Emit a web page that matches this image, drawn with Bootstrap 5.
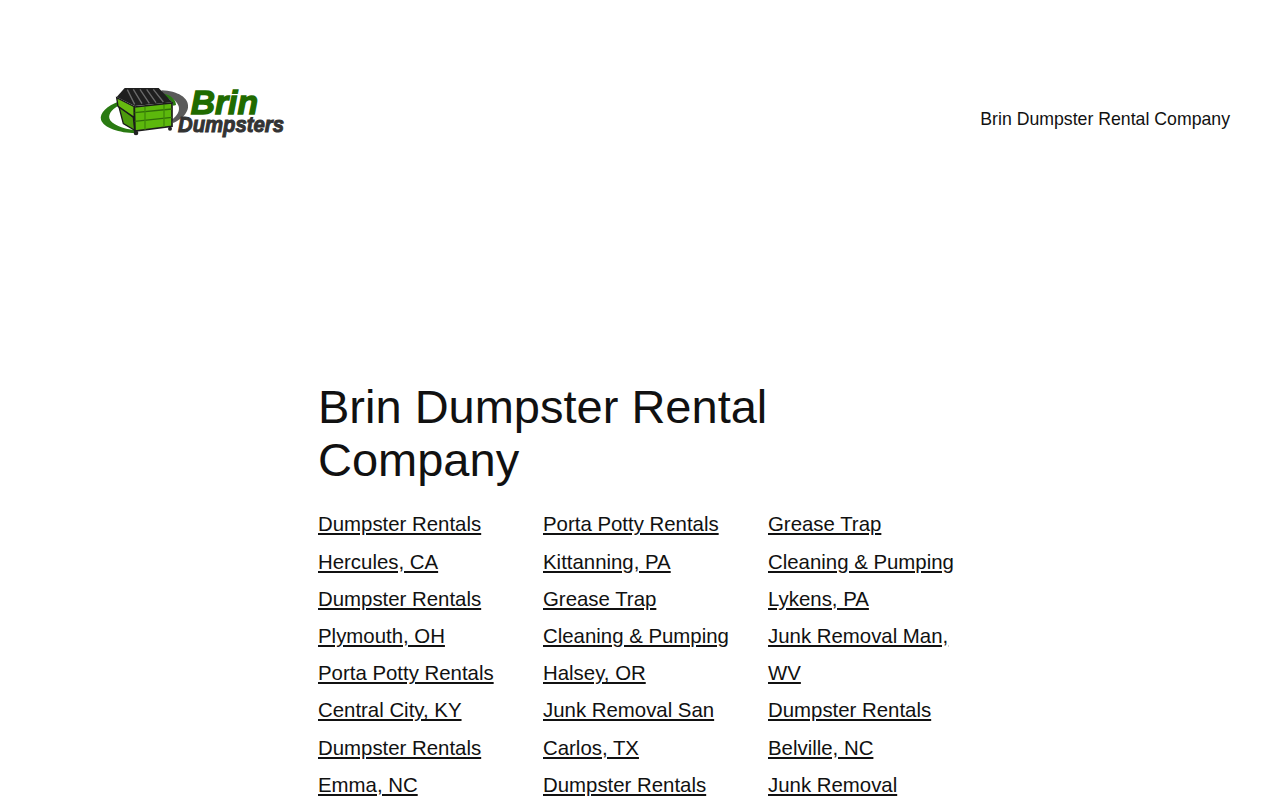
<!DOCTYPE html>
<html lang="en">
<head>
  <meta charset="UTF-8" />
  <meta name="viewport" content="width=device-width, initial-scale=1" />
  <title>Brin Dumpster Rental Company</title>
  <link href="https://cdn.jsdelivr.net/npm/bootstrap@5.3.0/dist/css/bootstrap.min.css" rel="stylesheet" />
  <style>
    body {
      font-family: "Liberation Sans", Arial, sans-serif;
      color: #111;
      background: #fff;
      overflow: hidden;
      height: 800px;
    }
    .site-head { padding: 75px 50px 0 90px; }
    .site-logo { display: block; width: 210px; height: 70px; }
    .site-name { font-size: 17.7px; line-height: 24px; padding-top: 18px; color: #111; text-decoration: none; }
    .page-main { width: 640px; margin-left: 318px; padding-top: 235px; }
    .page-title { font-size: 47px; line-height: 53px; font-weight: 400; margin: 0 0 20.35px; width: 500px; }
    .link-col { width: 225px; padding-right: 30px; font-size: 20.4px; line-height: 37.2px; }
    .link-col:last-child { width: 190px; padding-right: 0; }
    .link-col a { color: #111; display: block; }
  </style>
</head>
<body>
  <header class="site-head d-flex justify-content-between align-items-center">
    <svg class="site-logo" viewBox="0 0 630 210" role="img" aria-label="Brin Dumpsters">
      <!-- swooshes -->
      <path d="M90 78C50 92 28 115 33 134C40 158 90 174 135 174L135 166C100 162 62 148 58 130C55 114 70 100 92 88Z" fill="#2a7a12"/>
      <path d="M215 46C262 48 298 68 294 98C291 116 275 132 250 144L246 134C262 122 270 108 266 94C260 74 238 62 212 56Z" fill="#5a5a5a"/>
      <path d="M222 56C245 62 258 74 258 90L250 92C246 78 236 68 220 62Z" fill="#2a7a12"/>
      <!-- lid -->
      <path d="M80 66L104 39H206L247 82L134 93Z" fill="#1f1f1f"/>
      <path d="M112 44L134 88M130 43L156 86M150 43L178 85M170 43L198 83M190 43L220 81" stroke="#6a6a6a" stroke-width="4"/>
      <!-- side -->
      <path d="M86 92L130 127L134 166L100 146Z" fill="#4c9a0c" stroke="#1b1b1b" stroke-width="4"/>
      <path d="M80 68L133 95V128L84 94Z" fill="#66bb10" stroke="#1b1b1b" stroke-width="4"/>
      <!-- front -->
      <path d="M133 96L246 84V154L135 168Z" fill="#5cb80c" stroke="#1b1b1b" stroke-width="5"/>
      <path d="M134 113L246 102M134 139L246 127" stroke="#2f6d08" stroke-width="4"/>
      <path d="M165 96V164M222 90V156" stroke="#3f8a0a" stroke-width="4"/>
      <circle cx="138" cy="174" r="7" fill="#222"/>
      <circle cx="240" cy="161" r="6" fill="#222"/>
      <!-- wordmark -->
      <text x="302" y="118" font-family="Liberation Sans" font-weight="700" font-style="italic" font-size="101" fill="#1f6b00" stroke="#1f6b00" stroke-width="4" textLength="202" lengthAdjust="spacingAndGlyphs">Brin</text>
      <text x="264" y="172" font-family="Liberation Sans" font-weight="700" font-style="italic" font-size="64" fill="#333" stroke="#333" stroke-width="3" textLength="318" lengthAdjust="spacingAndGlyphs">Dumpsters</text>
    </svg>
    <a class="site-name" href="#">Brin Dumpster Rental Company</a>
  </header>
  <main class="page-main">
    <h1 class="page-title">Brin Dumpster Rental Company</h1>
    <div class="d-flex">
      <div class="link-col">
        <a href="#">Dumpster Rentals Hercules, CA</a>
        <a href="#">Dumpster Rentals Plymouth, OH</a>
        <a href="#">Porta Potty Rentals Central City, KY</a>
        <a href="#">Dumpster Rentals Emma, NC</a>
      </div>
      <div class="link-col">
        <a href="#">Porta Potty Rentals Kittanning, PA</a>
        <a href="#">Grease Trap Cleaning &amp; Pumping Halsey, OR</a>
        <a href="#">Junk Removal San Carlos, TX</a>
        <a href="#">Dumpster Rentals</a>
      </div>
      <div class="link-col">
        <a href="#">Grease Trap Cleaning &amp; Pumping Lykens, PA</a>
        <a href="#">Junk Removal Man, WV</a>
        <a href="#">Dumpster Rentals Belville, NC</a>
        <a href="#">Junk Removal</a>
      </div>
    </div>
  </main>
  <script src="https://cdn.jsdelivr.net/npm/bootstrap@5.3.0/dist/js/bootstrap.bundle.min.js"></script>
</body>
</html>
